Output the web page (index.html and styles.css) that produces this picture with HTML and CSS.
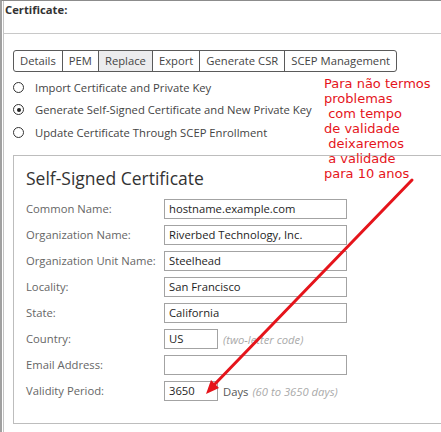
FILE: index.html
```html
<!DOCTYPE html>
<html>
<head>
<meta charset="utf-8">
<link rel="stylesheet" href="styles.css">
</head>
<body>
<div class="frame">
  <div class="inner">
    <div class="title">Certificate:</div>
    <div class="panel">
      <div class="tabs">
        <div class="tab">Details</div>
        <div class="tab">PEM</div>
        <div class="tab active">Replace</div>
        <div class="tab">Export</div>
        <div class="tab">Generate CSR</div>
        <div class="tab">SCEP Management</div>
      </div>
      <div class="radios">
        <div class="radio-row"><span class="radio"></span>Import Certificate and Private Key</div>
        <div class="radio-row"><span class="radio checked"></span>Generate Self-Signed Certificate and New Private Key</div>
        <div class="radio-row"><span class="radio"></span>Update Certificate Through SCEP Enrollment</div>
      </div>
      <div class="box">
        <h2 class="box-title">Self-Signed Certificate</h2>
        <div class="form">
          <div class="label">Common Name:</div>
          <div class="field"><div class="input">hostname.example.com</div></div>
          <div class="label">Organization Name:</div>
          <div class="field"><div class="input">Riverbed Technology, Inc.</div></div>
          <div class="label">Organization Unit Name:</div>
          <div class="field"><div class="input">Steelhead</div></div>
          <div class="label">Locality:</div>
          <div class="field"><div class="input">San Francisco</div></div>
          <div class="label">State:</div>
          <div class="field"><div class="input">California</div></div>
          <div class="label">Country:</div>
          <div class="field"><div class="input small">US</div><span class="hint">(two-letter code)</span></div>
          <div class="label">Email Address:</div>
          <div class="field"><div class="input"></div></div>
          <div class="label">Validity Period:</div>
          <div class="field"><div class="input small">3650</div><span class="unit">Days</span><span class="hint">(60 to 3650 days)</span></div>
        </div>
      </div>
    </div>
  </div>
</div>
<div class="note">Para não termos
problemas
 com tempo
de validade
 deixaremos
 a validade
para 10 anos</div>
<svg class="arrow" width="441" height="432" viewBox="0 0 441 432">
  <line x1="412" y1="180" x2="213" y2="386" stroke="#e5141b" stroke-width="3" stroke-linecap="round"/>
  <polygon points="206,394 219,388 211,380" fill="#e5141b"/>
</svg>
</body>
</html>
```
FILE: styles.css
```css
html, body {
  margin: 0;
  padding: 0;
}
body {
  width: 441px;
  height: 432px;
  overflow: hidden;
  position: relative;
  background: #fff;
  font-family: "Open Sans", "DejaVu Sans", sans-serif;
  font-size: 11.25px;
  color: #444;
}
.frame {
  height: 431px;
  border-top: 1px solid #8c8c8c;
  border-left: 2px solid #a0a0a0;
}
.inner {
  height: 100%;
  margin-left: 1px;
  border-left: 1px solid #c4c4c4;
}
.title {
  font-weight: bold;
  color: #333;
  line-height: 16px;
  padding: 1px 0 0 1px;
}
.panel {
  margin-top: 15px;
  border-top: 1px solid #c8c8c8;
  padding: 16px 0 0 9px;
}
.tabs {
  display: inline-flex;
  height: 22px;
  box-sizing: border-box;
  border: 1px solid #5a5a5a;
  border-radius: 3px;
}
.tab {
  padding: 0 6px;
  line-height: 20px;
  border-right: 1px solid #5a5a5a;
  color: #444;
}
.tab:last-child {
  border-right: none;
}
.tab.active {
  background: #ececee;
}
.radios {
  margin-top: 4px;
}
.radio-row {
  height: 22.5px;
  display: flex;
  align-items: center;
  color: #444;
}
.radio {
  width: 11px;
  height: 11px;
  box-sizing: border-box;
  border: 1.5px solid #333;
  border-radius: 50%;
  margin-right: 11px;
  display: flex;
  align-items: center;
  justify-content: center;
}
.radio.checked::after {
  content: "";
  width: 4px;
  height: 4px;
  border-radius: 50%;
  background: #222;
}
.box {
  margin-top: 11.5px;
  margin-right: -20px;
  border: 1px solid #bdbdbd;
  border-right: none;
  padding: 0 0 22px 12px;
}
.box-title {
  margin: 10px 0 9px;
  font-size: 17.5px;
  line-height: 24px;
  font-weight: normal;
  color: #333;
}
.form {
  display: grid;
  grid-template-columns: 138px auto;
  row-gap: 6px;
  align-items: center;
}
.label {
  color: #666;
  line-height: 20px;
}
.field {
  display: flex;
  align-items: center;
  height: 20px;
}
.input {
  width: 183px;
  height: 20px;
  box-sizing: border-box;
  border: 1px solid #a3a3a3;
  padding: 0 4px;
  line-height: 18px;
  color: #1e1e1e;
}
.input.small {
  width: 54px;
}
.unit {
  margin-left: 5px;
  color: #555;
}
.hint {
  margin-left: 5px;
  font-style: italic;
  color: #aaa;
}
.unit + .hint {
  margin-left: 4px;
}
.note {
  position: absolute;
  left: 324px;
  top: 76px;
  font-family: "DejaVu Sans", sans-serif;
  font-size: 13px;
  line-height: 15px;
  color: #e5141b;
  white-space: pre;
}
.arrow {
  position: absolute;
  left: 0;
  top: 0;
}
```
